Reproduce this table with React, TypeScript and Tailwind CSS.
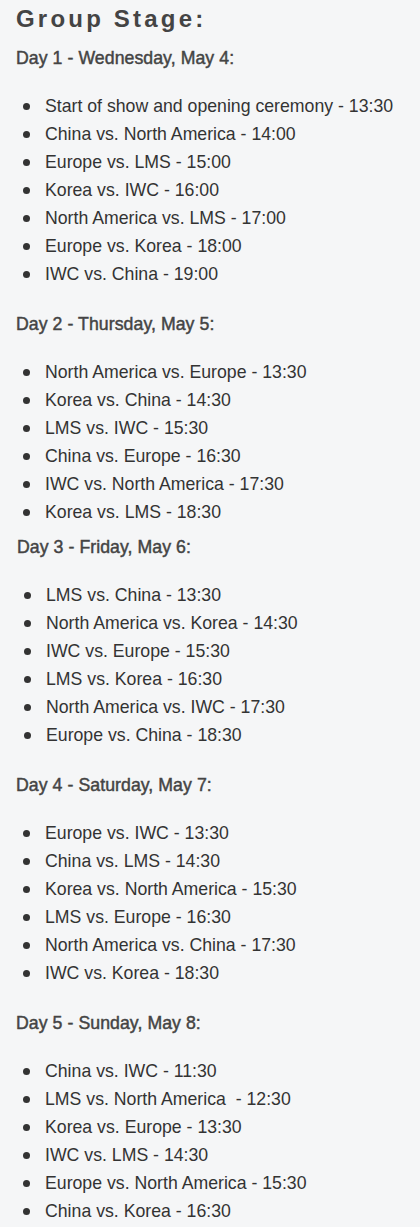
const days = [
  {
    title: "Day 1 - Wednesday, May 4:",
    gap: "mt-[9px]",
    matches: [
      "Start of show and opening ceremony - 13:30",
      "China vs. North America - 14:00",
      "Europe vs. LMS - 15:00",
      "Korea vs. IWC - 16:00",
      "North America vs. LMS - 17:00",
      "Europe vs. Korea - 18:00",
      "IWC vs. China - 19:00",
    ],
  },
  {
    title: "Day 2 - Thursday, May 5:",
    gap: "mt-[24px]",
    matches: [
      "North America vs. Europe - 13:30",
      "Korea vs. China - 14:30",
      "LMS vs. IWC - 15:30",
      "China vs. Europe - 16:30",
      "IWC vs. North America - 17:30",
      "Korea vs. LMS - 18:30",
    ],
  },
  {
    title: "Day 3 - Friday, May 6:",
    gap: "mt-[9px] ml-[1px]",
    matches: [
      "LMS vs. China - 13:30",
      "North America vs. Korea - 14:30",
      "IWC vs. Europe - 15:30",
      "LMS vs. Korea - 16:30",
      "North America vs. IWC - 17:30",
      "Europe vs. China - 18:30",
    ],
  },
  {
    title: "Day 4 - Saturday, May 7:",
    gap: "mt-[24px]",
    matches: [
      "Europe vs. IWC - 13:30",
      "China vs. LMS - 14:30",
      "Korea vs. North America - 15:30",
      "LMS vs. Europe - 16:30",
      "North America vs. China - 17:30",
      "IWC vs. Korea - 18:30",
    ],
  },
  {
    title: "Day 5 - Sunday, May 8:",
    gap: "mt-[24px]",
    matches: [
      "China vs. IWC - 11:30",
      "LMS vs. North America \u00a0- 12:30",
      "Korea vs. Europe - 13:30",
      "IWC vs. LMS - 14:30",
      "Europe vs. North America - 15:30",
      "China vs. Korea - 16:30",
    ],
  },
]

export default function App() {
  return (
    <div className="min-h-screen bg-[#f5f6f7] px-4 pt-px font-['Liberation_Sans',Arial,sans-serif] text-[#333]">
      <h2 className="h-[36px] text-[24px] font-bold leading-[36px] tracking-[3.2px] text-[#444]">
        Group Stage:
      </h2>

      {days.map((day) => (
        <section key={day.title} className={day.gap}>
          {/* Day heading, semi-bold look */}
          <h3 className="text-[17.7px] leading-[24px] tracking-[0.06px] text-[#444] [-webkit-text-stroke:0.45px_#444]">
            {day.title}
          </h3>

          <ul className="mt-[22px]">
            {day.matches.map((m) => (
              <li key={m} className="flex items-center text-[17.7px] leading-[28px]">
                <span className="ml-[7px] mr-[15px] h-[7px] w-[7px] shrink-0 rounded-full bg-[#333]" />
                <span>{m}</span>
              </li>
            ))}
          </ul>
        </section>
      ))}
    </div>
  )
}
